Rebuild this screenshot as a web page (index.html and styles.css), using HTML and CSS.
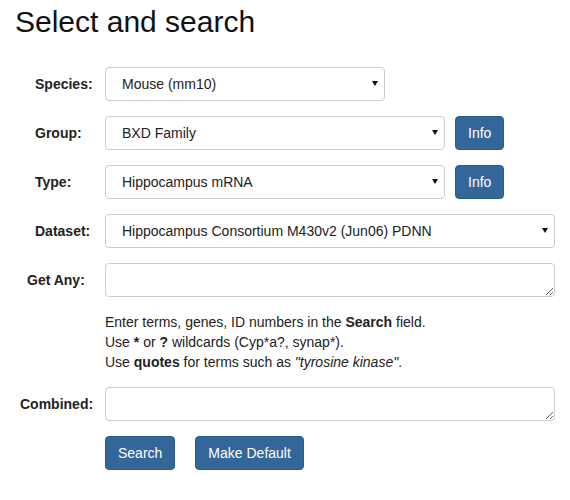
FILE: index.html
```html
<!DOCTYPE html>
<html>
<head>
<meta charset="utf-8">
<link rel="stylesheet" href="styles.css">
</head>
<body>
<div class="page">
  <h1 class="title">Select and search</h1>
  <form class="search-form">
    <label class="field-label">Species:</label>
    <div class="field-control">
      <span class="select-wrap w-280"><select class="form-control"><option>Mouse (mm10)</option></select></span>
    </div>

    <label class="field-label">Group:</label>
    <div class="field-control">
      <span class="select-wrap w-340"><select class="form-control"><option>BXD Family</option></select></span>
      <button type="button" class="btn">Info</button>
    </div>

    <label class="field-label">Type:</label>
    <div class="field-control">
      <span class="select-wrap w-340"><select class="form-control"><option>Hippocampus mRNA</option></select></span>
      <button type="button" class="btn">Info</button>
    </div>

    <label class="field-label">Dataset:</label>
    <div class="field-control">
      <span class="select-wrap w-450"><select class="form-control"><option>Hippocampus Consortium M430v2 (Jun06) PDNN</option></select></span>
    </div>

    <label class="field-label label-getany">Get Any:</label>
    <div class="field-control">
      <textarea class="form-control w-450 area"></textarea>
    </div>

    <div></div>
    <div class="help-text">
      Enter terms, genes, ID numbers in the <b>Search</b> field.<br>
      Use <b>*</b> or <b>?</b> wildcards (Cyp*a?, synap*).<br>
      Use <b>quotes</b> for terms such as <i>"tyrosine kinase"</i>.
    </div>

    <label class="field-label label-combined">Combined:</label>
    <div class="field-control">
      <textarea class="form-control w-450 area"></textarea>
    </div>

    <div></div>
    <div class="field-control buttons">
      <button type="button" class="btn">Search</button>
      <button type="button" class="btn">Make Default</button>
    </div>
  </form>
</div>
</body>
</html>
```
FILE: styles.css
```css
html, body {
  margin: 0;
  padding: 0;
  background: #fff;
}
body {
  font-family: "Liberation Sans", Arial, sans-serif;
  font-size: 14px;
  line-height: 20px;
  color: #333;
}
.page {
  padding: 0 15px;
}
.title {
  font-size: 30px;
  font-weight: normal;
  line-height: 33px;
  margin: 5px 0 29px;
  color: #111;
}
.search-form {
  display: grid;
  grid-template-columns: 90px 1fr;
  row-gap: 15px;
  margin: 0;
}
.field-label {
  font-weight: bold;
  display: flex;
  align-items: center;
  height: 34px;
  padding-left: 20px;
  color: #222;
}
.label-getany {
  padding-left: 12px;
}
.label-combined {
  padding-left: 5px;
}
.field-control {
  display: flex;
  align-items: center;
  gap: 10px;
  height: 34px;
}
.select-wrap {
  position: relative;
  display: block;
  height: 34px;
}
.select-wrap::after {
  content: "";
  position: absolute;
  right: 7px;
  top: 14px;
  border-left: 3px solid transparent;
  border-right: 3px solid transparent;
  border-top: 5px solid #111;
  pointer-events: none;
}
.form-control {
  box-sizing: border-box;
  height: 34px;
  padding: 6px 12px;
  font-family: inherit;
  font-size: 14px;
  color: #222;
  background: #fff;
  border: 1px solid #ccc;
  border-radius: 4px;
  margin: 0;
}
.select-wrap .form-control {
  width: 100%;
  -webkit-appearance: none;
  appearance: none;
  padding-left: 16px;
}
.w-280 { width: 280px; }
.w-340 { width: 340px; }
.w-450 { width: 450px; }
.area {
  resize: vertical;
  display: block;
}
.help-text {
  height: 60px;
  color: #222;
}
.buttons {
  gap: 20px;
}
.btn {
  box-sizing: border-box;
  height: 34px;
  padding: 6px 12px;
  font-family: inherit;
  font-size: 14px;
  line-height: 20px;
  color: #fff;
  background: #336699;
  border: 1px solid #2d5b89;
  border-radius: 4px;
  cursor: pointer;
  margin: 0;
}
```
